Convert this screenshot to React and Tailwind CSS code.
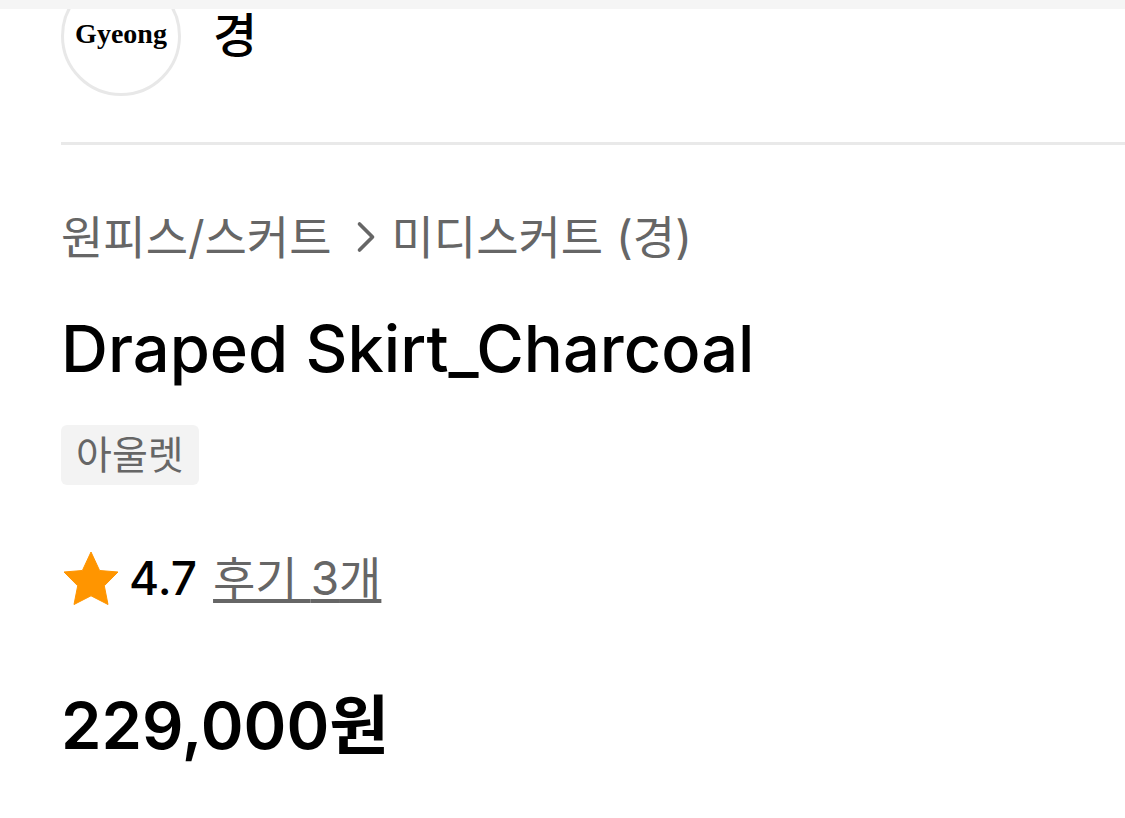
import { ChevronRight } from 'lucide-react'

const product = {
  brand: { name: '경', logo: 'Gyeong' },
  categories: ['원피스/스커트', '미디스커트 (경)'],
  name: 'Draped Skirt_Charcoal',
  tags: ['아울렛'],
  rating: 4.7,
  reviews: 3,
  price: 229000,
}

function StarIcon(){
  return (
    <svg className="w-[58px] h-14" viewBox="0 0 58 56" fill="#ff9500" stroke="#ff9500" strokeWidth="1" strokeLinejoin="round" aria-hidden="true">
      <path d="M30 2 L38.6 20.5 L57 22 L43.3 35.8 L47 54.5 L30 45.8 L13 54.5 L16.7 35.8 L3 22 L21.4 20.5 Z" />
    </svg>
  )
}

function BrandHeader({ brand }){
  return (
    <header className="h-[87px] flex items-end">
      <a href="#brand" className="flex items-center gap-8">
        <span className="w-[120px] h-[120px] shrink-0 rounded-full border-3 border-[#e8e8e8] pb-1 flex items-center justify-center font-['Liberation_Serif',serif] text-[28px] leading-8 font-bold">
          {brand.logo}
        </span>
        <span className="text-[48px] leading-[50px] font-medium">{brand.name}</span>
      </a>
    </header>
  )
}

export default function App(){
  const [group, category] = product.categories

  return (
    <div className="bg-white text-black font-[Inter,'Noto_Sans_CJK_KR',sans-serif]">
      {/* section divider, stays above the brand logo */}
      <div className="relative z-10 h-[9px] bg-[#f5f5f5]" />
      <main className="pl-[61px] pb-12">
        <BrandHeader brand={product.brand} />
        <hr className="mt-[46px] border-t-3 border-[#e9e9e9]" />

        <nav aria-label="카테고리" className="mt-[62px] flex items-center text-[46px] leading-[60px] text-[#666]">
          <a href="#group">{group}</a>
          <ChevronRight className="ml-2 w-[52px] h-[52px]" strokeWidth={1.7} aria-hidden="true" />
          <a href="#category">{category}</a>
        </nav>

        <h1 className="mt-[42px] text-[65px] leading-20 font-medium">{product.name}</h1>

        <div className="mt-9 flex gap-2">
          {product.tags.map(t => (
            <span key={t} className="rounded-md bg-[#f3f3f3] px-[15px] text-[39px] leading-[60px] text-[#666]">{t}</span>
          ))}
        </div>

        <div className="mt-[63px] flex items-center text-[46px] leading-[60px]">
          <StarIcon />
          <span className="ml-[10px] font-medium">{product.rating}</span>
          <a href="#reviews" className="ml-4 text-[#666] underline decoration-4 underline-offset-4">후기 {product.reviews}개</a>
        </div>

        <p className="mt-[78px] text-[65px] leading-20 font-semibold">{product.price.toLocaleString('en-US')}원</p>
      </main>
    </div>
  )
}
